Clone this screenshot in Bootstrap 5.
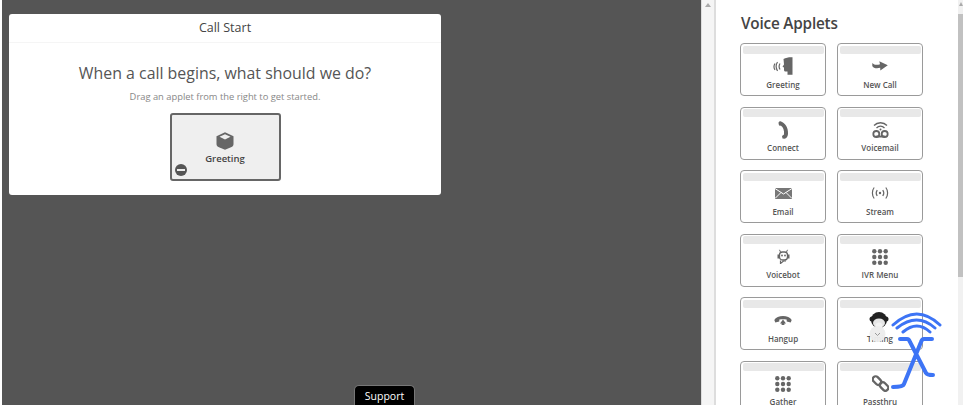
<!DOCTYPE html>
<html lang="en">
<head>
  <meta charset="UTF-8">
  <title>Call Flow Editor</title>
  <link href="https://cdn.jsdelivr.net/npm/bootstrap@5.3.0/dist/css/bootstrap.min.css" rel="stylesheet">
  <style>
    html, body { height: 100%; overflow: hidden; }
    body { font-family: "Open Sans", sans-serif; color: #444; background: #fff; }

    .editor-shell { height: 405px; padding-left: 2px; }
    .flow-canvas { width: 699px; background: #555; padding: 14px 0 0 7px; flex: none; }

    .start-panel { width: 432px; height: 181px; background: #fff; border-radius: 3px; }
    .start-title { height: 29px; line-height: 28px; font-size: 12.5px; color: #444; border-bottom: 1px solid #f5f5f5; }
    .start-question { font-size: 15.9px; line-height: 22px; color: #555; margin: 19px 0 0; }
    .start-hint { font-size: 9.35px; line-height: 14px; color: #888; margin: 6px 0 9px; }

    .drop-tile { width: 111px; height: 68px; background: #efefef; border: 2px solid #666; border-radius: 3px; }
    .drop-tile svg { margin-top: 17px; }
    .drop-label { font-size: 9.5px; font-weight: 600; color: #444; line-height: 14px; margin-top: 2px; }
    .drop-remove { left: 3px; bottom: 3px; width: 12px; height: 12px; background: #555; }
    .drop-remove::after { content: ""; position: absolute; left: 2px; right: 2px; top: 5px; height: 2px; background: #eee; }

    .scroll-track { width: 15px; background: #f5f5f5; border-left: 1px solid #ddd; border-right: 2px solid #ddd; flex: none; }
    .scroll-track::before, .edge-scroll::before { content: ""; display: block; margin: 3px auto 0; width: 0; height: 0;
      border-left: 3px solid transparent; border-right: 3px solid transparent; border-bottom: 4px solid #aaa; }

    .applet-panel { width: 242px; padding-left: 24px; flex: none; }
    .applet-heading { font-size: 15.3px; font-weight: 600; line-height: 22px; color: #444; margin: 12px 0 9px 1px; letter-spacing: -.2px; }
    .applet-grid { display: grid; grid-template-columns: 86px 86px; grid-auto-rows: 53px; column-gap: 11px; row-gap: 10.5px; }
    .applet-tile { background: #fff; border: 1.5px solid #9a9a9a; border-radius: 4px; padding: 1.5px; overflow: hidden; }
    .applet-bar { height: 8px; background: #e8e8e8; border-radius: 2px; flex: none; }
    .applet-icon { height: 25px; }
    .applet-label { font-size: 8px; font-weight: 600; line-height: 11px; color: #555; }

    .edge-scroll { width: 5px; background: #f1f1f1; flex: none; }
    .edge-scroll::before { margin-top: 2px; border-left-width: 2px; border-right-width: 2px; }
    .edge-thumb { height: 263px; margin-top: 8px; background: #c1c1c1; }

    .support-tab { left: 354px; bottom: 0; width: 61px; height: 20px; background: #000; color: #fff; font-size: 10.5px; line-height: 21px;
      border: 1px solid #777; border-bottom: 0; border-radius: 5px 5px 0 0; }
    .mascot { left: 862px; top: 312px; }
    .brand-mark { left: 889px; top: 311px; }
  </style>
</head>
<body>

  <div class="editor-shell d-flex position-relative">

    <!-- Canvas -->
    <div class="flow-canvas">
      <div class="start-panel text-center">
        <div class="start-title">Call Start</div>
        <p class="start-question">When a call begins, what should we do?</p>
        <p class="start-hint">Drag an applet from the right to get started.</p>
        <div class="drop-tile position-relative mx-auto">
          <svg width="18" height="18" viewBox="0 0 18 18"><path d="M9 .3 17.500 4.200V12C17.500 13.500 16.700 14.500 15 15.300L9 17.800 3 15.300C1.300 14.500.5 13.500.5 12V4.200Z" fill="#666"/><path d="M9 2.200 14.500 4.800 9 7.600 3.500 4.800Z" fill="#eee"/></svg>
          <div class="drop-label">Greeting</div>
          <span class="drop-remove position-absolute rounded-circle"></span>
        </div>
      </div>
    </div>

    <div class="scroll-track"></div>

    <!-- Applet list -->
    <div class="applet-panel">
      <div class="applet-heading">Voice Applets</div>
      <div class="applet-grid">

        <div class="applet-tile d-flex flex-column text-center">
          <div class="applet-bar"></div>
          <div class="applet-icon d-flex align-items-center justify-content-center">
            <svg width="20" height="18" viewBox="0 0 20 18"><path d="M10.500 2C13 .4 16.500 0 19.500.2V17.800H14.500V14.500H12.500C11.500 14.500 11 13.800 11 13V10.500L9.500 9.800 11 7.500Z" fill="#666"/><path d="M7 6.500C5.800 8.500 5.800 10.500 7 12.500M4.500 5C2.800 7.500 2.800 11 4.500 14M2 6.500C.7 8.500.7 10.800 2 12.800" fill="none" stroke="#666" stroke-width="1.200"/></svg>
          </div>
          <div class="applet-label">Greeting</div>
        </div>

        <div class="applet-tile d-flex flex-column text-center">
          <div class="applet-bar"></div>
          <div class="applet-icon d-flex align-items-center justify-content-center">
            <svg width="16" height="10" viewBox="0 0 16 10"><path d="M.3 2C2 4 5 4.200 8 3.300L7.300 .2 15.800 4.300 8.300 9.500 8.200 6.800C5 7.800 1.200 7.300.3 5Z" fill="#666"/></svg>
          </div>
          <div class="applet-label">New Call</div>
        </div>

        <div class="applet-tile d-flex flex-column text-center">
          <div class="applet-bar"></div>
          <div class="applet-icon d-flex align-items-center justify-content-center">
            <svg width="11" height="18" viewBox="0 0 11 18"><path d="M.5 2C.5.8 1.500.3 2.500.3 7 1.500 10.500 7 10 13 9.800 15.500 8.500 17.500 6.500 17.800L4.500 17.500 4 15 6 13.500C6.500 9 5 6 3 4.700L1 4.500Z" fill="#666"/></svg>
          </div>
          <div class="applet-label">Connect</div>
        </div>

        <div class="applet-tile d-flex flex-column text-center">
          <div class="applet-bar"></div>
          <div class="applet-icon d-flex align-items-center justify-content-center">
            <svg width="17" height="17" viewBox="0 0 17 17"><path d="M2 4.500C5.500.8 11.500.8 15 4.500M4.500 7C6.800 4.600 10.200 4.600 12.500 7" fill="none" stroke="#666" stroke-width="1.300"/><circle cx="8.500" cy="8.500" r="1" fill="#666"/><circle cx="4.300" cy="13" r="3" fill="none" stroke="#666" stroke-width="1.800"/><circle cx="12.700" cy="13" r="3" fill="none" stroke="#666" stroke-width="1.800"/><path d="M4.300 15.500H12.700" stroke="#666" stroke-width="1.800"/></svg>
          </div>
          <div class="applet-label">Voicemail</div>
        </div>

        <div class="applet-tile d-flex flex-column text-center">
          <div class="applet-bar"></div>
          <div class="applet-icon d-flex align-items-center justify-content-center">
            <svg width="17" height="11" viewBox="0 0 17 11"><rect width="17" height="11" fill="#777"/><path d="M0 .5 8.500 6 17 .5M0 10.500 6 4.500M17 10.500 11 4.500" fill="none" stroke="#fff" stroke-width="1"/></svg>
          </div>
          <div class="applet-label">Email</div>
        </div>

        <div class="applet-tile d-flex flex-column text-center">
          <div class="applet-bar"></div>
          <div class="applet-icon d-flex align-items-center justify-content-center">
            <svg width="18" height="14" viewBox="0 0 18 14"><circle cx="9" cy="7" r="1.200" fill="#666"/><path d="M6.200 4C5 5.800 5 8.200 6.200 10M11.800 4C13 5.800 13 8.200 11.800 10M3.200 1.500C.8 4.500.8 9.500 3.200 12.500M14.800 1.500C17.200 4.500 17.200 9.500 14.800 12.500" fill="none" stroke="#666" stroke-width="1.200"/></svg>
          </div>
          <div class="applet-label">Stream</div>
        </div>

        <div class="applet-tile d-flex flex-column text-center">
          <div class="applet-bar"></div>
          <div class="applet-icon d-flex align-items-center justify-content-center">
            <svg width="13" height="15" viewBox="0 0 13 15"><path d="M3.500 3 2.500.8M9.500 3 10.500.8" stroke="#666" stroke-width="1"/><rect x="2.500" y="3" width="8" height="8" rx="3" fill="none" stroke="#666" stroke-width="1.300"/><circle cx="5" cy="6.500" r=".9" fill="#666"/><circle cx="8" cy="6.500" r=".9" fill="#666"/><rect x=".5" y="5.500" width="1.600" height="4" fill="#666"/><rect x="10.900" y="5.500" width="1.600" height="4" fill="#666"/><path d="M3.500 11.500V14.500L6.500 12H9" fill="none" stroke="#666" stroke-width="1.200"/></svg>
          </div>
          <div class="applet-label">Voicebot</div>
        </div>

        <div class="applet-tile d-flex flex-column text-center">
          <div class="applet-bar"></div>
          <div class="applet-icon d-flex align-items-center justify-content-center">
            <svg width="16" height="16" viewBox="0 0 16 16" fill="#666"><circle cx="2.300" cy="2.300" r="2.200"/><circle cx="8" cy="2.300" r="2.200"/><circle cx="13.700" cy="2.300" r="2.200"/><circle cx="2.300" cy="8" r="2.200"/><circle cx="8" cy="8" r="2.200"/><circle cx="13.700" cy="8" r="2.200"/><circle cx="2.300" cy="13.700" r="2.200"/><circle cx="8" cy="13.700" r="2.200"/><circle cx="13.700" cy="13.700" r="2.200"/></svg>
          </div>
          <div class="applet-label">IVR Menu</div>
        </div>

        <div class="applet-tile d-flex flex-column text-center">
          <div class="applet-bar"></div>
          <div class="applet-icon d-flex align-items-center justify-content-center">
            <svg width="18" height="10" viewBox="0 0 18 10"><path d="M.3 5C3-.5 15-.5 17.700 5L16.700 7.500 12.700 6.500V4.600C11 4 7 4 5.300 4.600V6.500L1.300 7.500Z" fill="#666"/><path d="M9 4.500 12 8.500H10.400V10H7.600V8.500H6Z" fill="#666"/></svg>
          </div>
          <div class="applet-label">Hangup</div>
        </div>

        <div class="applet-tile d-flex flex-column text-center">
          <div class="applet-bar"></div>
          <div class="applet-icon"></div>
          <div class="applet-label">Timing</div>
        </div>

        <div class="applet-tile d-flex flex-column text-center">
          <div class="applet-bar"></div>
          <div class="applet-icon d-flex align-items-center justify-content-center">
            <svg width="16" height="16" viewBox="0 0 16 16" fill="#666"><circle cx="2.300" cy="2.300" r="2.200"/><circle cx="8" cy="2.300" r="2.200"/><circle cx="13.700" cy="2.300" r="2.200"/><circle cx="2.300" cy="8" r="2.200"/><circle cx="8" cy="8" r="2.200"/><circle cx="13.700" cy="8" r="2.200"/><circle cx="2.300" cy="13.700" r="2.200"/><circle cx="8" cy="13.700" r="2.200"/><circle cx="13.700" cy="13.700" r="2.200"/></svg>
          </div>
          <div class="applet-label">Gather</div>
        </div>

        <div class="applet-tile d-flex flex-column text-center">
          <div class="applet-bar"></div>
          <div class="applet-icon d-flex align-items-center justify-content-center">
            <svg width="17" height="17" viewBox="0 0 16 16"><rect x=".2" y="2.500" width="9" height="5.500" rx="2.700" transform="rotate(45 4.700 5.200)" fill="none" stroke="#666" stroke-width="2.200"/><rect x="6.800" y="8" width="9" height="5.500" rx="2.700" transform="rotate(45 11.300 10.800)" fill="none" stroke="#666" stroke-width="2.200"/></svg>
          </div>
          <div class="applet-label">Passthru</div>
        </div>

      </div>
    </div>

    <div class="edge-scroll ms-auto"><div class="edge-thumb"></div></div>

    <!-- Overlays -->
    <div class="support-tab position-absolute text-center">Support</div>

    <svg class="mascot position-absolute" width="34" height="36" viewBox="0 0 34 36">
      <circle cx="10" cy="7" r="2.500" fill="#222"/><circle cx="24" cy="7" r="2.500" fill="#222"/>
      <circle cx="17" cy="8" r="8" fill="#222"/>
      <ellipse cx="17" cy="11" rx="6" ry="4.500" fill="#e6e6e6"/>
      <circle cx="17" cy="14" r="3.500" fill="#f2f2f2"/>
      <circle cx="15.500" cy="22" r="8" fill="#ececec" opacity=".96"/>
      <path d="M13 21 15.500 23.500 18 21" fill="none" stroke="#999" stroke-width="1"/>
    </svg>

    <svg class="brand-mark position-absolute" width="54" height="80" viewBox="0 0 54 80">
      <g fill="none" stroke="#3d74f5" stroke-linecap="round">
        <path stroke-width="3" d="M4 14Q28-8 51 14M8 17Q28 1 46 17M14 21Q28 9 41 21"/>
        <path stroke-width="4" d="M11 28H18Q20 28 21 31L37 62Q38 64 44 64M43 28H35Q33 28 32 31L15 73Q14 76 4 76"/>
      </g>
    </svg>

  </div>

  <script src="https://cdn.jsdelivr.net/npm/bootstrap@5.3.0/dist/js/bootstrap.bundle.min.js"></script>
</body>
</html>
